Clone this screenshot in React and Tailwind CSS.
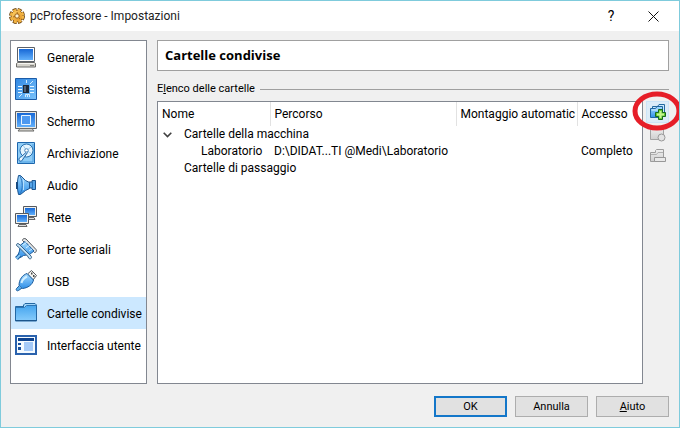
import { useState } from 'react';
import clsx from 'clsx';

function Gradients() {
  return (
    <svg width="0" height="0" className="absolute" aria-hidden="true">
      <defs>
        <linearGradient id="screen" x1="0" y1="0" x2="0" y2="1">
          <stop offset="0" stopColor="#1768d6" />
          <stop offset="1" stopColor="#62b0fb" />
        </linearGradient>
        <linearGradient id="sky" x1="0" y1="0" x2="0" y2="1">
          <stop offset="0" stopColor="#a5dbff" />
          <stop offset="1" stopColor="#2f8fe8" />
        </linearGradient>
        <linearGradient id="tile" x1="0" y1="0" x2="1" y2="1">
          <stop offset="0" stopColor="#2f86e2" />
          <stop offset="1" stopColor="#7cc4fb" />
        </linearGradient>
        <linearGradient id="folder" x1="0" y1="0" x2="0" y2="1">
          <stop offset="0" stopColor="#45a5ee" />
          <stop offset="1" stopColor="#85cbfb" />
        </linearGradient>
        <linearGradient id="gold" x1="0" y1="0" x2="1" y2="1">
          <stop offset="0" stopColor="#ffd873" />
          <stop offset="1" stopColor="#e08a16" />
        </linearGradient>
        <linearGradient id="grey" x1="0" y1="0" x2="0" y2="1">
          <stop offset="0" stopColor="#f0f0f0" />
          <stop offset="1" stopColor="#cfcfcf" />
        </linearGradient>
      </defs>
    </svg>
  );
}

function Icon({ children }) {
  return (
    <svg width="22" height="22" viewBox="0 0 22 22" className="shrink-0" aria-hidden="true">
      {children}
    </svg>
  );
}

function GeneralIcon() {
  return (
    <Icon>
      <path d="M2.5 1.5h17v14h-17z" fill="#fff" stroke="#5b6068" />
      <path d="M4 3h14v11H4z" fill="url(#screen)" />
      <path d="M2.5 16.500h17l1 1v3.500h-19v-3.500z" fill="#d4d2cb" stroke="#6b6b68" />
      <path d="M3 17.5h16" stroke="#f6f6f3" />
      <path d="M15 19.5h4" stroke="#85857f" />
    </Icon>
  );
}

function SystemIcon() {
  return (
    <Icon>
      <path d="M.5.5h21v21H.5z" fill="url(#tile)" stroke="#1b5ba8" />
      <path d="M3 8.500h4M3 11.500h4M3 14.500h4M15 8.500h4M15 11.500h4M15 14.500h4" stroke="#e8f6ff" />
      <path d="M11.500 2v3M15 6l3-3M4 19l3-3M10.500 19v-2.500h2V19m0-2.500h2V19" stroke="#d4edff" fill="none" />
      <path d="M8 7h6v8H8z" fill="#1d2a3b" />
      <path d="M9 8h2v6H9z" fill="#526173" />
    </Icon>
  );
}

function DisplayIcon() {
  return (
    <Icon>
      <path d="M.5 1.500h21v17H.5z" fill="#e9e8e3" stroke="#5b6068" />
      <path d="M2 3h18v14H2z" fill="url(#screen)" />
      <path d="M6.500 5.500h9v9h-9z" fill="#4d99f0" stroke="#e6f4ff" />
      <path d="M5 18.500h12l2 2.500H3z" fill="#d4d2cb" stroke="#6b6b68" />
    </Icon>
  );
}

function StorageIcon() {
  return (
    <Icon>
      <path d="M2.500.5h17v21h-17z" fill="#8fcdf7" stroke="#1e67ad" />
      <path d="M4 20h14V2" fill="none" stroke="#4a9de0" />
      <circle cx="11.500" cy="8.500" r="6.500" fill="#e5f5ff" stroke="#276fae" />
      <path d="M11.500 8.500 16 5M11.500 8.500l5 3M11.500 8.500 8.500 4" stroke="#9bcdf0" />
      <circle cx="11.500" cy="8.500" r="1.800" fill="#fff" stroke="#4a87bb" />
      <path d="M12.500 10.500 7 18.500c-1 1.500-3.500.5-3-1.500.3-1.500 1.500-2 2.500-2.500l5-4.500" fill="#cbe8fc" stroke="#1f63a4" />
      <circle cx="6" cy="17" r="1" fill="#fff" />
    </Icon>
  );
}

function AudioIcon() {
  return (
    <Icon>
      <path d="M14 8h3V6.500h3.500v9H17V14h-3" fill="#55a4e8" stroke="#1d5590" />
      <path d="M3.500 1.500c-1.500 5-1.500 14 0 19h2l5-4 4-2V8.500l-4-2-5-5z" fill="url(#sky)" stroke="#1d5590" />
      <path d="M5 2c3 6 3 13 0 18" fill="none" stroke="#2d74bc" />
      <path d="M2 8v7" stroke="#174a80" strokeWidth="2" />
      <path d="M8.500 6v10" stroke="#b6e0ff" />
      <path d="M17.500 8v6" stroke="#2c74b8" />
    </Icon>
  );
}

function NetworkIcon() {
  return (
    <Icon>
      <path d="M8.500.5h13v10h-13z" fill="#f1f0eb" stroke="#55595f" />
      <path d="M10 2h10v7H10z" fill="url(#screen)" />
      <path d="M12 11.500h7l1 2h-9z" fill="#ddd" stroke="#666" />
      <path d="M.5 7.500h13v10H.5z" fill="#f1f0eb" stroke="#55595f" />
      <path d="M2 9h10v7H2z" fill="url(#screen)" />
      <path d="M4 18.500h7l1 2H3z" fill="#ddd" stroke="#666" />
    </Icon>
  );
}

function SerialIcon() {
  return (
    <Icon>
      <path d="M7.500 2.500c0-2 2-2.500 3.500-1.500L21 11.500c1 1.500 0 3-1.500 3z" fill="#e7e8e8" stroke="#52575c" />
      <path d="m5 7.500 5-4L19 13l-4.500 3.500-6 1-3 2L3 17l1.500-4z" fill="url(#sky)" stroke="#1c5c9d" />
      <path d="M1.500 7.500c-.5-1.500 1-2.500 2.500-1.500L16 18c1.500 2-.5 3.500-2 2.500l-1.500-2.500L4 9.500z" fill="#c3e2f7" stroke="#3b6388" />
      <path d="m8 7 4-3M11 10l4-3M14 13l3-2" stroke="#d4efff" />
      <path d="m1.500 20.500 3.500-3.500" stroke="#1c5c9d" strokeWidth="4" />
      <path d="m1.500 20.500 3.500-3.500" stroke="#83c7f6" strokeWidth="2" />
    </Icon>
  );
}

function UsbIcon() {
  return (
    <Icon>
      <path d="m12.500 4 4-3.500 5 5-3.500 4.500z" fill="#f4f4f1" stroke="#55595e" />
      <path d="M16 3.500h1.500M18 6h1.500" stroke="#4d4d4d" strokeWidth="2" />
      <path d="m12 3.500 6.500 6.500c-1 5-6 8-11 8.500L4 15.500C4 9.500 7.500 5 12 3.500z" fill="url(#sky)" stroke="#1c5c9d" />
      <path d="M6.500 13c.5-3 2.500-5 5.500-6.500" fill="none" stroke="#d2efff" strokeWidth="2" />
      <path d="m4 16-2.500 2.500c-1 1.500.5 3 2 2L7 18" fill="#5cadea" stroke="#1c5c9d" />
    </Icon>
  );
}

function FolderIcon() {
  return (
    <Icon>
      <path d="M8.500 5V3L10 1.500h10L21.500 3v16H.5V4.500h8" fill="#9fd4f8" stroke="#2468a3" />
      <path d="M1 5.500h9l2-2h9v15H1z" fill="url(#folder)" />
      <path d="M.5 5.500h9l2-2h10" fill="none" stroke="#2c75b4" />
      <path d="M.5 18.500h21" stroke="#1c568d" />
    </Icon>
  );
}

function InterfaceIcon() {
  return (
    <Icon>
      <path d="M1 2h20v18H1z" fill="#f4faff" stroke="#2a62ad" strokeWidth="2" />
      <path d="M3 4h16v3H3z" fill="#0e438f" />
      <path d="M3 9h3v2H3zM3 13h3v3H3z" fill="#174f9c" />
      <path d="M9 8h9v9H9z" fill="#a5caf8" />
    </Icon>
  );
}

function GearIcon() {
  return (
    <svg width="16" height="16" viewBox="0 0 16 16" className="shrink-0" aria-hidden="true">
      <circle cx="8" cy="8" r="6.300" fill="none" stroke="#6b4413" strokeWidth="3.400" strokeDasharray="3.700 1.250" />
      <circle cx="8" cy="8" r="5.800" fill="url(#gold)" stroke="#9a611a" />
      <circle cx="8" cy="8" r="6" fill="none" stroke="#f2b545" strokeWidth="2.400" strokeDasharray="3 1.712" />
      <circle cx="8" cy="8" r="2.200" fill="#fff3d1" stroke="#985d14" />
      <path d="m8 4 .8 2M4 9l2-.5M11 11l-1-1" stroke="#a86a19" />
    </svg>
  );
}

function AddFolderIcon() {
  return (
    <svg width="17" height="18" viewBox="0 0 17 18" className="shrink-0" aria-hidden="true">
      <path d="M3.500 3.500h5l1.500-2h5.500v11h-12z" fill="#c9e9fc" stroke="#23689f" />
      <path d="M1.500 5.500h5l1.500-2h5.500v11h-12z" fill="url(#sky)" stroke="#1f65a0" />
      <path d="M2.500 7h10" stroke="#d5f0ff" />
      <path d="M9.500 6.500h4v3h3v4h-3v3h-4v-3h-3v-4h3z" fill="#62c933" stroke="#17691b" />
      <path d="M11.500 8v7M8 11.500h7" stroke="#c6f690" strokeWidth="2" />
    </svg>
  );
}

function EditFolderIcon() {
  return (
    <svg width="17" height="16" viewBox="0 0 17 16" className="shrink-0" aria-hidden="true">
      <path d="M1.500 3.500h5l1.500-2h6.500v12h-13z" fill="url(#grey)" stroke="#a3a3a3" />
      <circle cx="12.500" cy="11.500" r="3.500" fill="#e3e3e3" stroke="#989898" />
    </svg>
  );
}

function RemoveFolderIcon() {
  return (
    <svg width="17" height="16" viewBox="0 0 17 16" className="shrink-0" aria-hidden="true">
      <path d="M1.500 4.500h5v-2l1-1h7v12h-13z" fill="url(#grey)" stroke="#9c9c9c" />
      <path d="M2 6.500h5.500l1.500-2h5" fill="none" stroke="#b0b0b0" />
      <path d="M5.500 9.500h11v4h-11z" fill="#e9e9e9" stroke="#989898" />
    </svg>
  );
}

const pages = [
  { label: 'Generale', icon: GeneralIcon },
  { label: 'Sistema', icon: SystemIcon },
  { label: 'Schermo', icon: DisplayIcon },
  { label: 'Archiviazione', icon: StorageIcon },
  { label: 'Audio', icon: AudioIcon },
  { label: 'Rete', icon: NetworkIcon },
  { label: 'Porte seriali', icon: SerialIcon },
  { label: 'USB', icon: UsbIcon },
  { label: 'Cartelle condivise', icon: FolderIcon },
  { label: 'Interfaccia utente', icon: InterfaceIcon },
];

function TitleBar() {
  return (
    <header className="flex h-[30px] items-center bg-white pl-2 pr-4">
      <GearIcon />
      <h1 className="ml-[5px] flex-1 text-[#222]">pcProfessore - Impostazioni</h1>
      <button type="button" aria-label="Guida" className="w-6 text-[14px]">
        ?
      </button>
      <button type="button" aria-label="Chiudi" className="ml-5 flex w-5 justify-center">
        <svg width="11" height="11" viewBox="0 0 11 11" aria-hidden="true">
          <path d="m.5.5 10 10m0-10-10 10" stroke="#111" />
        </svg>
      </button>
    </header>
  );
}

function Sidebar({ current, onSelect }) {
  return (
    <nav className="w-[137px] shrink-0 border border-[#828790] bg-white">
      {pages.map(({ label, icon: PageIcon }) => (
        <button
          key={label}
          type="button"
          onClick={() => onSelect(label)}
          aria-current={label === current ? 'page' : undefined}
          className={clsx(
            'flex h-8 w-full items-center gap-[10px] whitespace-nowrap pl-1 text-left',
            label === current && 'bg-[#cce8ff]'
          )}
        >
          <PageIcon />
          <span className="pt-[2px]">{label}</span>
        </button>
      ))}
    </nav>
  );
}

function FolderTable() {
  const [open, setOpen] = useState(true);
  return (
    <div className="min-w-0 flex-1 border border-[#828790] bg-white">
      <table className="w-full table-fixed border-collapse text-left">
        <colgroup>
          <col className="w-[112px]" />
          <col className="w-[186px]" />
          <col className="w-[121px]" />
          <col />
        </colgroup>
        <thead>
          <tr className="h-6">
            <th className="border-r border-[#e2e2e2] pl-1 font-normal">Nome</th>
            <th className="border-r border-[#e2e2e2] pl-1 font-normal">Percorso</th>
            <th className="overflow-hidden whitespace-nowrap border-r border-[#e2e2e2] pl-1 font-normal">
              Montaggio automatic
            </th>
            <th className="pl-1 font-normal">Accesso</th>
          </tr>
        </thead>
        <tbody className="whitespace-nowrap leading-[17px]">
          <tr>
            <td colSpan={4}>
              <div className="flex items-center">
                <button
                  type="button"
                  aria-label="Cartelle della macchina"
                  aria-expanded={open}
                  onClick={() => setOpen(!open)}
                  className="flex w-[26px] pl-[5px]"
                >
                  <svg width="9" height="6" viewBox="0 0 9 6" aria-hidden="true">
                    <path d="m.7.8 3.800 3.800L8.300.8" fill="none" stroke="#404040" strokeWidth="1.600" />
                  </svg>
                </button>
                Cartelle della macchina
              </div>
            </td>
          </tr>
          {open && (
            <tr>
              <td className="pl-[43px]">Laboratorio</td>
              <td className="pl-1">D:\DIDAT...TI @Medi\Laboratorio</td>
              <td />
              <td className="pl-1">Completo</td>
            </tr>
          )}
          <tr>
            <td colSpan={4} className="pl-[26px]">
              Cartelle di passaggio
            </td>
          </tr>
        </tbody>
      </table>
    </div>
  );
}

function FolderToolbar() {
  return (
    <div className="flex w-[23px] shrink-0 flex-col">
      <div className="relative">
        <button
          type="button"
          aria-label="Aggiungi cartella"
          className="flex h-[22px] w-full items-center justify-center border border-[#cce4f7] bg-[#dcecf8]"
        >
          <AddFolderIcon />
        </button>
        <svg
          width="50"
          height="42"
          viewBox="0 0 50 42"
          className="pointer-events-none absolute -left-4 -top-3"
          aria-hidden="true"
        >
          <ellipse cx="27" cy="22" rx="22" ry="17" fill="none" stroke="#e61e28" strokeWidth="5" />
        </svg>
      </div>
      <button type="button" disabled aria-label="Modifica cartella" className="flex h-[22px] items-center justify-center">
        <EditFolderIcon />
      </button>
      <button type="button" disabled aria-label="Rimuovi cartella" className="flex h-[22px] items-center justify-center">
        <RemoveFolderIcon />
      </button>
    </div>
  );
}

function DialogButton({ primary, children }) {
  return (
    <button
      type="button"
      className={clsx(
        'flex h-[21px] w-[73px] items-center justify-center bg-[#e1e1e1]',
        primary ? 'border-2 border-[#1477c9]' : 'border border-[#adadad]'
      )}
    >
      <span className="pt-px text-[11px]">{children}</span>
    </button>
  );
}

export default function App() {
  const [page, setPage] = useState('Cartelle condivise');
  return (
    <div className="flex min-h-screen flex-col overflow-hidden border border-[#7fcbdc] bg-[#f0f0f0] font-['Roboto','Open_Sans',sans-serif] text-[12px] text-black">
      <Gradients />
      <TitleBar />
      <main className="flex flex-1 gap-[10px] pl-[9px] pr-[10px] pt-[9px]">
        <Sidebar current={page} onSelect={setPage} />
        <section className="flex min-w-0 flex-1 flex-col">
          <h2 className="flex h-[31px] items-center border border-[#a0a0a0] bg-white pl-[7px] font-['Open_Sans','Noto_Sans',sans-serif] text-[13px] font-bold">
            {page}
          </h2>
          <div className="mt-[9px] flex h-[18px] items-center gap-[5px] text-[11px]">
            <h3>
              E<u>l</u>enco delle cartelle
            </h3>
            <div className="h-px flex-1 bg-[#a0a0a0]" />
          </div>
          <div className="mt-[3px] flex flex-1 gap-[3px]">
            <FolderTable />
            <FolderToolbar />
          </div>
        </section>
      </main>
      <footer className="flex justify-end gap-2 pb-[10px] pr-[10px] pt-3">
        <DialogButton primary>OK</DialogButton>
        <DialogButton>Annulla</DialogButton>
        <DialogButton>
          <u>A</u>iuto
        </DialogButton>
      </footer>
    </div>
  );
}
